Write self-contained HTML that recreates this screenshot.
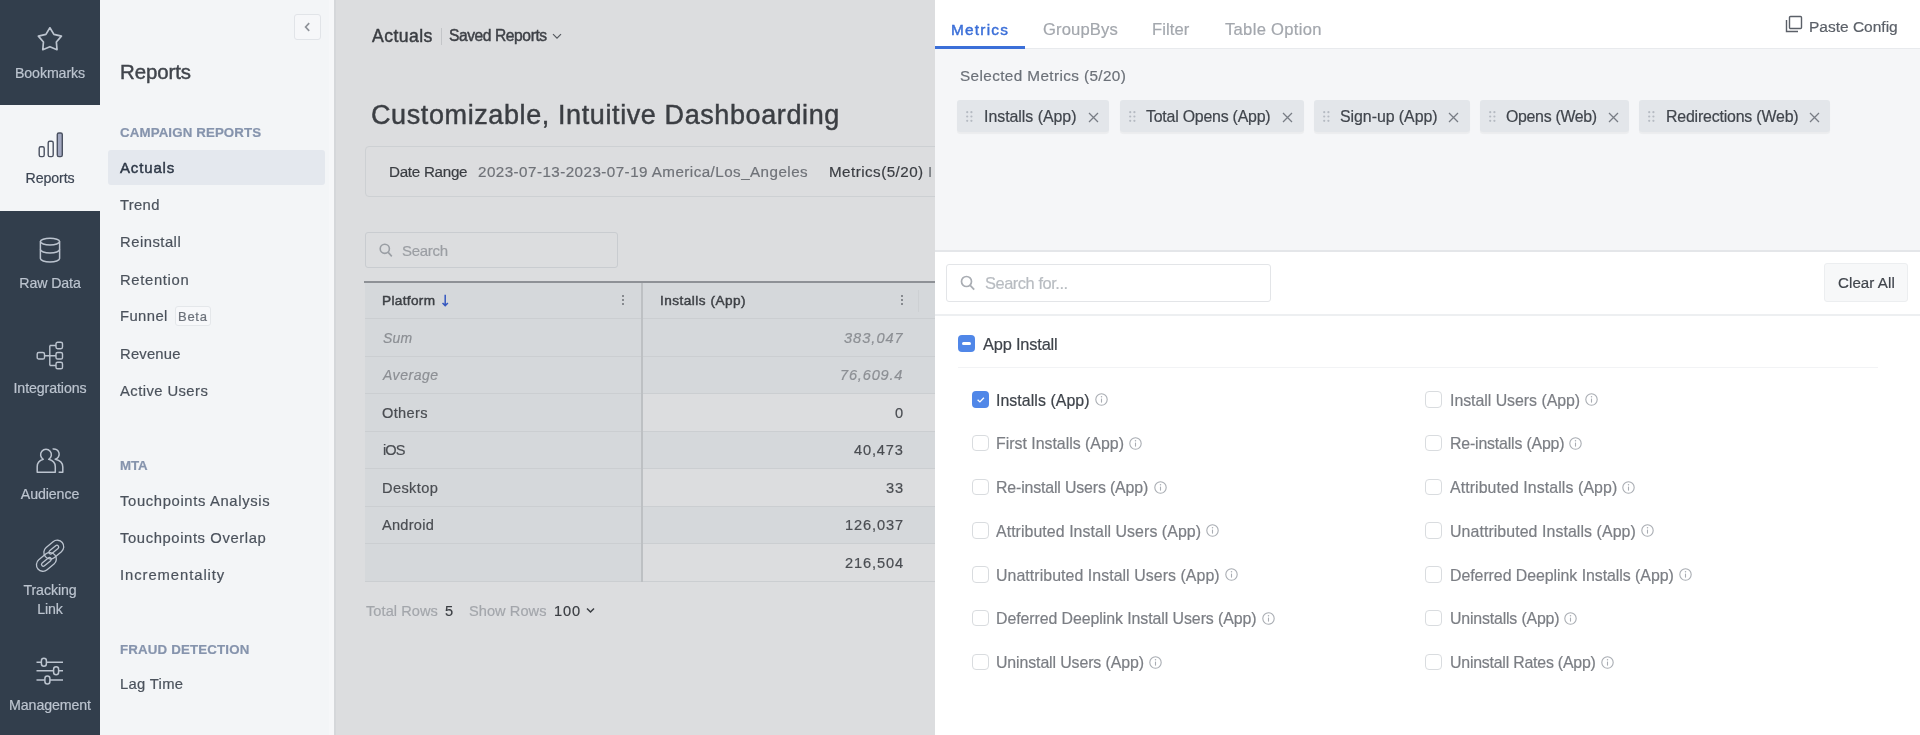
<!DOCTYPE html>
<html><head><meta charset="utf-8">
<style>
*{box-sizing:border-box;margin:0;padding:0}
html,body{width:1920px;height:735px;overflow:hidden;background:#fff;font-family:"Liberation Sans",sans-serif;position:relative}
.abs{position:absolute}
.t{position:absolute;white-space:nowrap;-webkit-text-stroke-width:0.2px;will-change:transform}
</style></head><body>
<div class="abs" style="left:0px;top:0px;width:100px;height:735px;background:#323e4c;"></div>
<div class="abs" style="left:0px;top:105px;width:100px;height:106px;background:#f3f5f7;"></div>
<div class="t" style="left:0;width:100px;text-align:center;top:66.00px;font-size:14.2px;line-height:14.2px;color:#bcc4cf;letter-spacing:-0.1px">Bookmarks</div>
<div class="t" style="left:0;width:100px;text-align:center;top:171.00px;font-size:14.2px;line-height:14.2px;color:#3d4654;letter-spacing:-0.1px">Reports</div>
<div class="t" style="left:0;width:100px;text-align:center;top:276.00px;font-size:14.2px;line-height:14.2px;color:#bcc4cf;letter-spacing:-0.1px">Raw Data</div>
<div class="t" style="left:0;width:100px;text-align:center;top:381.00px;font-size:14.2px;line-height:14.2px;color:#bcc4cf;letter-spacing:-0.1px">Integrations</div>
<div class="t" style="left:0;width:100px;text-align:center;top:487.00px;font-size:14.2px;line-height:14.2px;color:#bcc4cf;letter-spacing:-0.1px">Audience</div>
<div class="t" style="left:0;width:100px;text-align:center;top:583.00px;font-size:14.2px;line-height:14.2px;color:#bcc4cf;letter-spacing:-0.1px">Tracking</div>
<div class="t" style="left:0;width:100px;text-align:center;top:602.00px;font-size:14.2px;line-height:14.2px;color:#bcc4cf;letter-spacing:-0.1px">Link</div>
<div class="t" style="left:0;width:100px;text-align:center;top:698.00px;font-size:14.2px;line-height:14.2px;color:#bcc4cf;letter-spacing:-0.1px">Management</div>
<svg class="abs" style="left:36px;top:27px" width="28" height="27" viewBox="0 0 28 27"><path d="M13.90 0.80 L17.90 7.40 L25.41 9.16 L20.37 15.00 L21.01 22.69 L13.90 19.70 L6.79 22.69 L7.43 15.00 L2.39 9.16 L9.90 7.40z" fill="none" stroke="#bcc4cf" stroke-width="1.7" stroke-linejoin="round"/></svg>
<svg class="abs" style="left:36px;top:131px" width="28" height="28" viewBox="0 0 28 28"><g fill="none" stroke="#4a5161" stroke-width="1.4"><rect x="3.2" y="15.7" width="5" height="9.9" rx="1.6"/><rect x="12.2" y="10.2" width="5" height="15.4" rx="1.6"/><rect x="21.3" y="2" width="5" height="23.6" rx="1.6" fill="#a2a8c0"/></g></svg>
<svg class="abs" style="left:38px;top:236px" width="25" height="28" viewBox="0 0 25 28"><g fill="none" stroke="#bcc4cf" stroke-width="1.5"><ellipse cx="12" cy="5.6" rx="9.6" ry="3.4"/><path d="M2.4 5.6v17c0 1.9 4.3 3.4 9.6 3.4s9.6-1.5 9.6-3.4v-17"/><path d="M2.4 13.6c0 1.9 4.3 3.4 9.6 3.4s9.6-1.5 9.6-3.4"/></g></svg>
<svg class="abs" style="left:36px;top:341px" width="28" height="30" viewBox="0 0 28 30"><g fill="none" stroke="#bcc4cf" stroke-width="1.4"><rect x="1.2" y="11.5" width="7.3" height="6.5" rx="1.6"/><rect x="20" y="1.2" width="6.5" height="6.5" rx="1.6"/><rect x="20" y="11.5" width="6.5" height="6.5" rx="1.6"/><rect x="20" y="21.3" width="6.5" height="6.5" rx="1.6"/><path d="M8.5 14.75h11.5M13.8 4.5v20M13.8 4.5h6.2M13.8 24.5h6.2"/></g></svg>
<svg class="abs" style="left:30px;top:438px" width="40" height="42" viewBox="30 438 40 42"><g fill="none" stroke="#bcc4cf" stroke-width="1.5" stroke-linejoin="round"><path d="M43.3 459.3A5.4 5.4 0 1 1 48.7 459.3C52.6 460.2 55.3 462.8 55.3 466.8V472.3H37.2V466.8C37.2 462.8 39.9 460.2 43.3 459.3Z"/><path d="M52.6 449.1A5.2 5.2 0 0 1 55.2 459.3C59.8 460.3 62.8 463 62.8 467V472.3H58.6"/></g></svg>
<svg class="abs" style="left:32px;top:538px" width="36" height="36" viewBox="0 0 36 36"><g fill="none" stroke="#bcc4cf" stroke-width="1.3"><g transform="rotate(-40 21.8 11.6)"><rect x="10.8" y="5.1" width="22" height="13" rx="6.5"/><rect x="16.0" y="9.799999999999999" width="11.6" height="3.6" rx="1.8"/></g><g transform="rotate(-40 14.4 23.9)"><rect x="3.4000000000000004" y="17.4" width="22" height="13" rx="6.5"/><rect x="8.600000000000001" y="22.099999999999998" width="11.6" height="3.6" rx="1.8"/></g></g></svg>
<svg class="abs" style="left:35px;top:657px" width="30" height="30" viewBox="0 0 30 30"><g fill="none" stroke="#bcc4cf" stroke-width="1.5"><path d="M1.5 5.2h4.9M11.4 5.2h16.6M1.5 13.7h17.1M23.6 13.7h4.4M1.5 22.9h8.4M14.9 22.9h13.1"/><rect x="6.4" y="1.2" width="5" height="8" rx="2.5"/><rect x="18.6" y="9.7" width="5" height="8" rx="2.5"/><rect x="9.9" y="18.9" width="5" height="8" rx="2.5"/></g></svg>
<div class="abs" style="left:100px;top:0px;width:234px;height:735px;background:#f3f5f7;"></div>
<div class="abs" style="left:294px;top:14px;width:27px;height:26px;background:#f6f7f9;border:1px solid #e1e4e8;border-radius:3px;box-sizing:border-box;"></div>
<svg class="abs" style="left:303px;top:22px" width="8" height="10" viewBox="0 0 8 10"><path d="M6.2 1.2L2.6 5l3.6 3.8" fill="none" stroke="#8f9399" stroke-width="1.7"/></svg>
<div class="t" style="left:120.40px;top:62px;font-size:20.4px;line-height:20.4px;color:#40454c;-webkit-text-stroke-width:0.45px;letter-spacing:-0.07px;">Reports</div>
<div class="t" style="left:120.00px;top:126px;font-size:13.3px;line-height:13.3px;color:#8694ad;font-weight:700;letter-spacing:0.119px;">CAMPAIGN REPORTS</div>
<div class="abs" style="left:108px;top:150px;width:217px;height:34.5px;background:#e4e8ee;border-radius:3px;"></div>
<div class="t" style="left:119.70px;top:160px;font-size:15px;line-height:15px;color:#2d3746;-webkit-text-stroke-width:0.45px;letter-spacing:0.852px;">Actuals</div>
<div class="t" style="left:120.00px;top:198px;font-size:14.8px;line-height:14.8px;color:#4b525c;letter-spacing:0.323px;">Trend</div>
<div class="t" style="left:120.00px;top:235px;font-size:14.8px;line-height:14.8px;color:#4b525c;letter-spacing:0.493px;">Reinstall</div>
<div class="t" style="left:120.00px;top:273px;font-size:14.8px;line-height:14.8px;color:#4b525c;letter-spacing:0.668px;">Retention</div>
<div class="t" style="left:120.00px;top:309px;font-size:14.8px;line-height:14.8px;color:#4b525c;letter-spacing:0.428px;">Funnel</div>
<div class="t" style="left:120.00px;top:347px;font-size:14.8px;line-height:14.8px;color:#4b525c;letter-spacing:0.193px;">Revenue</div>
<div class="t" style="left:120.00px;top:384px;font-size:14.8px;line-height:14.8px;color:#4b525c;letter-spacing:0.431px;">Active Users</div>
<div class="t" style="left:120.00px;top:494px;font-size:14.8px;line-height:14.8px;color:#4b525c;letter-spacing:0.643px;">Touchpoints Analysis</div>
<div class="t" style="left:120.00px;top:531px;font-size:14.8px;line-height:14.8px;color:#4b525c;letter-spacing:0.605px;">Touchpoints Overlap</div>
<div class="t" style="left:120.00px;top:568px;font-size:14.8px;line-height:14.8px;color:#4b525c;letter-spacing:0.936px;">Incrementality</div>
<div class="t" style="left:120.00px;top:677px;font-size:14.8px;line-height:14.8px;color:#4b525c;letter-spacing:0.318px;">Lag Time</div>
<div class="abs" style="left:175px;top:306px;width:35.5px;height:19.5px;background:#f7f8fa;border:1px solid #e4e7ea;border-radius:3px;box-sizing:border-box;"></div>
<div class="t" style="left:177.60px;top:310px;font-size:13px;line-height:13px;color:#6b717a;letter-spacing:0.715px;">Beta</div>
<div class="t" style="left:120.00px;top:459px;font-size:13.3px;line-height:13.3px;color:#8694ad;font-weight:700;letter-spacing:-0.062px;">MTA</div>
<div class="t" style="left:120.00px;top:643px;font-size:13.3px;line-height:13.3px;color:#8694ad;font-weight:700;letter-spacing:0.158px;">FRAUD DETECTION</div>
<div class="abs" style="left:334px;top:0px;width:601px;height:735px;background:#dcdddf;"></div>
<div class="abs" style="left:334px;top:0px;width:1.5px;height:735px;background:#d5d7da;"></div>
<div class="abs" style="left:329px;top:0px;width:5px;height:735px;background:#f6f7f9;"></div>
<div class="t" style="left:371.90px;top:28px;font-size:17.6px;line-height:17.6px;color:#3a3d42;-webkit-text-stroke-width:0.45px;letter-spacing:0.448px;">Actuals</div>
<div class="abs" style="left:441px;top:28px;width:1px;height:17px;background:#c3c5c8;"></div>
<div class="t" style="left:448.75px;top:28px;font-size:15.6px;line-height:15.6px;color:#3e4147;-webkit-text-stroke-width:0.45px;letter-spacing:-0.42px;">Saved Reports</div>
<svg class="abs" style="left:552px;top:33px" width="10" height="7" viewBox="0 0 10 7"><path d="M1 1.2l4 4 4-4" fill="none" stroke="#55595f" stroke-width="1.2"/></svg>
<div class="t" style="left:370.90px;top:102px;font-size:27px;line-height:27px;color:#3b3e43;-webkit-text-stroke-width:0.45px;letter-spacing:0.601px;">Customizable, Intuitive Dashboarding</div>
<div class="abs" style="left:365px;top:146px;width:595px;height:51px;background:none;border:1px solid #cdd0d3;border-radius:4px;box-sizing:border-box;"></div>
<div class="t" style="left:388.70px;top:164px;font-size:15.2px;line-height:15.2px;color:#3a3d42;letter-spacing:-0.28px;">Date Range</div>
<div class="t" style="left:477.80px;top:164px;font-size:15.2px;line-height:15.2px;color:#6f7278;letter-spacing:0.452px;">2023-07-13-2023-07-19 America/Los_Angeles</div>
<div class="t" style="left:829.20px;top:164px;font-size:15.2px;line-height:15.2px;color:#3a3d42;letter-spacing:0.459px;">Metrics(5/20)</div>
<div class="t" style="left:928.00px;top:164px;font-size:15px;line-height:15px;color:#6f7278;">I</div>
<div class="abs" style="left:365px;top:232px;width:253px;height:36px;background:none;border:1px solid #c9ccd0;border-radius:3px;box-sizing:border-box;"></div>
<svg class="abs" style="left:379px;top:243px" width="14" height="15" viewBox="0 0 14 15"><g fill="none" stroke="#9a9ea4" stroke-width="1.6"><circle cx="5.8" cy="5.8" r="4.6"/><path d="M9.2 9.4l3.6 4"/></g></svg>
<div class="t" style="left:401.90px;top:243px;font-size:15px;line-height:15px;color:#9b9ea3;letter-spacing:-0.304px;">Search</div>
<div class="abs" style="left:365px;top:282px;width:570px;height:300px;background:#d5d8db;"></div>
<div class="abs" style="left:642px;top:394px;width:293px;height:37.5px;background:#dcdddf;"></div>
<div class="abs" style="left:642px;top:469px;width:293px;height:37.5px;background:#dcdddf;"></div>
<div class="abs" style="left:642px;top:544px;width:293px;height:37.5px;background:#dcdddf;"></div>
<div class="abs" style="left:364px;top:281px;width:571px;height:2px;background:#8e9196;"></div>
<div class="abs" style="left:365px;top:318px;width:570px;height:1px;background:#cbced1;"></div>
<div class="abs" style="left:365px;top:356px;width:570px;height:1px;background:#cbced1;"></div>
<div class="abs" style="left:365px;top:393px;width:570px;height:1px;background:#cbced1;"></div>
<div class="abs" style="left:365px;top:431px;width:570px;height:1px;background:#cbced1;"></div>
<div class="abs" style="left:365px;top:468px;width:570px;height:1px;background:#cbced1;"></div>
<div class="abs" style="left:365px;top:506px;width:570px;height:1px;background:#cbced1;"></div>
<div class="abs" style="left:365px;top:543px;width:570px;height:1px;background:#cbced1;"></div>
<div class="abs" style="left:365px;top:581px;width:570px;height:1px;background:#cbced1;"></div>
<div class="abs" style="left:641px;top:283px;width:2px;height:299px;background:#bdc0c3;"></div>
<div class="abs" style="left:918px;top:290px;width:1px;height:22px;background:#cdd0d3;"></div>
<div class="t" style="left:382.40px;top:294px;font-size:13.6px;line-height:13.6px;color:#3d4045;-webkit-text-stroke-width:0.45px;letter-spacing:0.352px;">Platform</div>
<svg class="abs" style="left:440px;top:294px" width="10" height="14" viewBox="0 0 10 14"><g fill="none" stroke="#3558c0" stroke-width="1.5"><path d="M5.2 0.8v10.6M2.5 9L5.2 11.6 7.9 9"/></g></svg>
<div class="abs" style="left:622px;top:295px;width:2px;height:2px;background:#6d7176;border-radius:1px;"></div><div class="abs" style="left:622px;top:299px;width:2px;height:2px;background:#6d7176;border-radius:1px;"></div><div class="abs" style="left:622px;top:303px;width:2px;height:2px;background:#6d7176;border-radius:1px;"></div>
<div class="abs" style="left:901px;top:295px;width:2px;height:2px;background:#6d7176;border-radius:1px;"></div><div class="abs" style="left:901px;top:299px;width:2px;height:2px;background:#6d7176;border-radius:1px;"></div><div class="abs" style="left:901px;top:303px;width:2px;height:2px;background:#6d7176;border-radius:1px;"></div>
<div class="t" style="left:660.20px;top:294px;font-size:13.6px;line-height:13.6px;color:#3d4045;-webkit-text-stroke-width:0.45px;letter-spacing:0.48px;">Installs (App)</div>
<div class="t" style="left:383.30px;top:331px;font-size:14px;line-height:14px;color:#8c8f94;letter-spacing:0.208px;font-style:italic;">Sum</div>
<div class="t" style="left:843.70px;top:331px;font-size:14.6px;line-height:14.6px;color:#8c8f94;letter-spacing:0.995px;font-style:italic;">383,047</div>
<div class="t" style="left:383.10px;top:368px;font-size:14px;line-height:14px;color:#8c8f94;letter-spacing:0.534px;font-style:italic;">Average</div>
<div class="t" style="left:840.40px;top:368px;font-size:14.6px;line-height:14.6px;color:#8c8f94;letter-spacing:0.809px;font-style:italic;">76,609.4</div>
<div class="t" style="left:382.20px;top:406px;font-size:14.6px;line-height:14.6px;color:#4a4d52;letter-spacing:0.337px;">Others</div>
<div class="t" style="left:895.00px;top:406px;font-size:14.6px;line-height:14.6px;color:#4a4d52;">0</div>
<div class="t" style="left:382.50px;top:443px;font-size:14.6px;line-height:14.6px;color:#4a4d52;letter-spacing:-0.969px;">iOS</div>
<div class="t" style="left:854.00px;top:443px;font-size:14.6px;line-height:14.6px;color:#4a4d52;letter-spacing:0.848px;">40,473</div>
<div class="t" style="left:382.40px;top:481px;font-size:14.6px;line-height:14.6px;color:#4a4d52;letter-spacing:0.375px;">Desktop</div>
<div class="t" style="left:885.90px;top:481px;font-size:14.6px;line-height:14.6px;color:#4a4d52;letter-spacing:0.765px;">33</div>
<div class="t" style="left:382.40px;top:518px;font-size:14.6px;line-height:14.6px;color:#4a4d52;letter-spacing:0.262px;">Android</div>
<div class="t" style="left:844.70px;top:518px;font-size:14.6px;line-height:14.6px;color:#4a4d52;letter-spacing:0.903px;">126,037</div>
<div class="t" style="left:844.70px;top:556px;font-size:14.6px;line-height:14.6px;color:#4a4d52;letter-spacing:0.903px;">216,504</div>
<div class="t" style="left:365.90px;top:604px;font-size:14.6px;line-height:14.6px;color:#a3a6ab;letter-spacing:0.055px;">Total Rows</div>
<div class="t" style="left:445.00px;top:604px;font-size:14.6px;line-height:14.6px;color:#3a3d42;">5</div>
<div class="t" style="left:468.80px;top:604px;font-size:14.6px;line-height:14.6px;color:#a3a6ab;letter-spacing:0.051px;">Show Rows</div>
<div class="t" style="left:553.50px;top:604px;font-size:14.6px;line-height:14.6px;color:#3a3d42;letter-spacing:0.874px;">100</div>
<svg class="abs" style="left:586px;top:607px" width="9" height="7" viewBox="0 0 9 7"><path d="M1 1.5l3.5 3.5 3.5-3.5" fill="none" stroke="#3a3d42" stroke-width="1.5"/></svg>
<div class="abs" style="left:935px;top:0px;width:985px;height:735px;background:#ffffff;border-top-left-radius:8px;"></div>
<div class="t" style="left:950.90px;top:22px;font-size:15.4px;line-height:15.4px;color:#3b6fd8;-webkit-text-stroke-width:0.45px;letter-spacing:1.23px;">Metrics</div>
<div class="t" style="left:1042.70px;top:22px;font-size:16.6px;line-height:16.6px;color:#a3a7ad;letter-spacing:0.142px;">GroupBys</div>
<div class="t" style="left:1152.00px;top:22px;font-size:16.6px;line-height:16.6px;color:#a3a7ad;letter-spacing:0.103px;">Filter</div>
<div class="t" style="left:1224.70px;top:22px;font-size:16.6px;line-height:16.6px;color:#a3a7ad;letter-spacing:0.299px;">Table Option</div>
<div class="abs" style="left:935px;top:48px;width:985px;height:1px;background:#e8eaed;"></div>
<div class="abs" style="left:935px;top:45.5px;width:90px;height:3.0px;background:#3b6fd8;"></div>
<svg class="abs" style="left:1785px;top:15px" width="18" height="18" viewBox="0 0 18 18"><g fill="none" stroke="#5b6068" stroke-width="1.4"><rect x="4.5" y="1.5" width="12" height="12" rx="1"/><path d="M1.5 5v11.5h11.5"/></g></svg>
<div class="t" style="left:1809.00px;top:19px;font-size:15.5px;line-height:15.5px;color:#5b6068;letter-spacing:-0.005px;">Paste Config</div>
<div class="abs" style="left:935px;top:49px;width:985px;height:201px;background:#f5f6f8;"></div>
<div class="abs" style="left:935px;top:250px;width:985px;height:1.5px;background:#e4e6e9;"></div>
<div class="t" style="left:959.50px;top:68px;font-size:15.3px;line-height:15.3px;color:#6b7078;letter-spacing:0.39px;">Selected Metrics (5/20)</div>
<div class="abs" style="left:957px;top:100px;width:152px;height:31.5px;background:#e3e6ea;border-radius:3px;box-shadow:0 1.5px 1px rgba(0,0,0,0.04);"></div>
<svg class="abs" style="left:966px;top:111px" width="8" height="12" viewBox="0 0 8 12"><circle cx="1.2" cy="1.2" r="1.1" fill="#b5bac2"/><circle cx="1.2" cy="5.5" r="1.1" fill="#b5bac2"/><circle cx="1.2" cy="9.799999999999999" r="1.1" fill="#b5bac2"/><circle cx="5.4" cy="1.2" r="1.1" fill="#b5bac2"/><circle cx="5.4" cy="5.5" r="1.1" fill="#b5bac2"/><circle cx="5.4" cy="9.799999999999999" r="1.1" fill="#b5bac2"/></svg>
<div class="t" style="left:983.70px;top:109px;font-size:15.9px;line-height:15.9px;color:#40454c;letter-spacing:-0.021px;">Installs (App)</div>
<svg class="abs" style="left:1088px;top:112px" width="11" height="11" viewBox="0 0 11 11"><path d="M1 1l9 9M10 1l-9 9" fill="none" stroke="#787d85" stroke-width="1.3"/></svg>
<div class="abs" style="left:1119.5px;top:100px;width:184.0px;height:31.5px;background:#e3e6ea;border-radius:3px;box-shadow:0 1.5px 1px rgba(0,0,0,0.04);"></div>
<svg class="abs" style="left:1129px;top:111px" width="8" height="12" viewBox="0 0 8 12"><circle cx="1.2" cy="1.2" r="1.1" fill="#b5bac2"/><circle cx="1.2" cy="5.5" r="1.1" fill="#b5bac2"/><circle cx="1.2" cy="9.799999999999999" r="1.1" fill="#b5bac2"/><circle cx="5.4" cy="1.2" r="1.1" fill="#b5bac2"/><circle cx="5.4" cy="5.5" r="1.1" fill="#b5bac2"/><circle cx="5.4" cy="9.799999999999999" r="1.1" fill="#b5bac2"/></svg>
<div class="t" style="left:1146.10px;top:109px;font-size:15.9px;line-height:15.9px;color:#40454c;letter-spacing:-0.216px;">Total Opens (App)</div>
<svg class="abs" style="left:1282px;top:112px" width="11" height="11" viewBox="0 0 11 11"><path d="M1 1l9 9M10 1l-9 9" fill="none" stroke="#787d85" stroke-width="1.3"/></svg>
<div class="abs" style="left:1313.5px;top:100px;width:156.0px;height:31.5px;background:#e3e6ea;border-radius:3px;box-shadow:0 1.5px 1px rgba(0,0,0,0.04);"></div>
<svg class="abs" style="left:1323px;top:111px" width="8" height="12" viewBox="0 0 8 12"><circle cx="1.2" cy="1.2" r="1.1" fill="#b5bac2"/><circle cx="1.2" cy="5.5" r="1.1" fill="#b5bac2"/><circle cx="1.2" cy="9.799999999999999" r="1.1" fill="#b5bac2"/><circle cx="5.4" cy="1.2" r="1.1" fill="#b5bac2"/><circle cx="5.4" cy="5.5" r="1.1" fill="#b5bac2"/><circle cx="5.4" cy="9.799999999999999" r="1.1" fill="#b5bac2"/></svg>
<div class="t" style="left:1340.20px;top:109px;font-size:15.9px;line-height:15.9px;color:#40454c;letter-spacing:-0.042px;">Sign-up (App)</div>
<svg class="abs" style="left:1448px;top:112px" width="11" height="11" viewBox="0 0 11 11"><path d="M1 1l9 9M10 1l-9 9" fill="none" stroke="#787d85" stroke-width="1.3"/></svg>
<div class="abs" style="left:1480px;top:100px;width:149px;height:31.5px;background:#e3e6ea;border-radius:3px;box-shadow:0 1.5px 1px rgba(0,0,0,0.04);"></div>
<svg class="abs" style="left:1489px;top:111px" width="8" height="12" viewBox="0 0 8 12"><circle cx="1.2" cy="1.2" r="1.1" fill="#b5bac2"/><circle cx="1.2" cy="5.5" r="1.1" fill="#b5bac2"/><circle cx="1.2" cy="9.799999999999999" r="1.1" fill="#b5bac2"/><circle cx="5.4" cy="1.2" r="1.1" fill="#b5bac2"/><circle cx="5.4" cy="5.5" r="1.1" fill="#b5bac2"/><circle cx="5.4" cy="9.799999999999999" r="1.1" fill="#b5bac2"/></svg>
<div class="t" style="left:1506.00px;top:109px;font-size:15.9px;line-height:15.9px;color:#40454c;letter-spacing:-0.306px;">Opens (Web)</div>
<svg class="abs" style="left:1608px;top:112px" width="11" height="11" viewBox="0 0 11 11"><path d="M1 1l9 9M10 1l-9 9" fill="none" stroke="#787d85" stroke-width="1.3"/></svg>
<div class="abs" style="left:1639px;top:100px;width:191px;height:31.5px;background:#e3e6ea;border-radius:3px;box-shadow:0 1.5px 1px rgba(0,0,0,0.04);"></div>
<svg class="abs" style="left:1648px;top:111px" width="8" height="12" viewBox="0 0 8 12"><circle cx="1.2" cy="1.2" r="1.1" fill="#b5bac2"/><circle cx="1.2" cy="5.5" r="1.1" fill="#b5bac2"/><circle cx="1.2" cy="9.799999999999999" r="1.1" fill="#b5bac2"/><circle cx="5.4" cy="1.2" r="1.1" fill="#b5bac2"/><circle cx="5.4" cy="5.5" r="1.1" fill="#b5bac2"/><circle cx="5.4" cy="9.799999999999999" r="1.1" fill="#b5bac2"/></svg>
<div class="t" style="left:1665.60px;top:109px;font-size:15.9px;line-height:15.9px;color:#40454c;letter-spacing:-0.182px;">Redirections (Web)</div>
<svg class="abs" style="left:1809px;top:112px" width="11" height="11" viewBox="0 0 11 11"><path d="M1 1l9 9M10 1l-9 9" fill="none" stroke="#787d85" stroke-width="1.3"/></svg>
<div class="abs" style="left:946px;top:264px;width:325px;height:37.5px;background:#fff;border:1px solid #e3e5e8;border-radius:3px;box-sizing:border-box;"></div>
<svg class="abs" style="left:960px;top:275px" width="16" height="16" viewBox="0 0 16 16"><g fill="none" stroke="#a9adb3" stroke-width="1.7"><circle cx="6.5" cy="6.5" r="5"/><path d="M10.2 10.4l4 4.2"/></g></svg>
<div class="t" style="left:984.90px;top:275px;font-size:16.4px;line-height:16.4px;color:#b8bcc1;letter-spacing:-0.444px;">Search for...</div>
<div class="abs" style="left:1824px;top:263px;width:84px;height:38.5px;background:#f7f8f9;border:1px solid #eceef0;border-radius:3px;box-sizing:border-box;"></div>
<div class="t" style="left:1837.70px;top:275px;font-size:15.1px;line-height:15.1px;color:#40454c;letter-spacing:0.071px;">Clear All</div>
<div class="abs" style="left:935px;top:313.5px;width:985px;height:2.0px;background:#edeff1;"></div>
<div class="abs" style="left:958px;top:335px;width:17px;height:17px;background:#5087e8;border-radius:4px;"></div>
<div class="abs" style="left:961.5px;top:342.3px;width:9.5px;height:3.0px;background:#ffffff;border-radius:1.5px;"></div>
<div class="t" style="left:982.60px;top:336px;font-size:16.4px;line-height:16.4px;color:#3e434a;letter-spacing:-0.187px;">App Install</div>
<div class="abs" style="left:958px;top:367px;width:920px;height:1px;background:#f2f3f5;"></div>
<div class="abs" style="left:972px;top:391.0px;width:17px;height:16.69999999999999px;background:#5087e8;border-radius:4px;"></div>
<svg class="abs" style="left:972px;top:391px" width="17" height="17" viewBox="0 0 17 17"><path d="M5.6 8.8l2.3 2.1 4-4.1" fill="none" stroke="#fff" stroke-width="1.4"/></svg>
<div class="t" style="left:996.30px;top:393px;font-size:15.9px;line-height:15.9px;color:#3e434a;letter-spacing:0.056px;">Installs (App)</div>
<svg class="abs" style="left:1095px;top:393px" width="13" height="13" viewBox="0 0 13 13"><g fill="none" stroke="#a9adb3" stroke-width="1.1"><circle cx="6.5" cy="6.5" r="5.7"/></g><path d="M6.5 5.6v4" stroke="#a9adb3" stroke-width="1.1"/><circle cx="6.5" cy="3.7" r=".75" fill="#a9adb3"/></svg>
<div class="abs" style="left:1425px;top:391.0px;width:17px;height:16.69999999999999px;background:#fff;border:1px solid #d9dcdf;border-radius:4px;box-sizing:border-box;"></div>
<div class="t" style="left:1449.80px;top:393px;font-size:15.9px;line-height:15.9px;color:#7b7e84;letter-spacing:-0.032px;">Install Users (App)</div>
<svg class="abs" style="left:1585px;top:393px" width="13" height="13" viewBox="0 0 13 13"><g fill="none" stroke="#a9adb3" stroke-width="1.1"><circle cx="6.5" cy="6.5" r="5.7"/></g><path d="M6.5 5.6v4" stroke="#a9adb3" stroke-width="1.1"/><circle cx="6.5" cy="3.7" r=".75" fill="#a9adb3"/></svg>
<div class="abs" style="left:972px;top:434.75px;width:17px;height:16.69999999999999px;background:#fff;border:1px solid #d9dcdf;border-radius:4px;box-sizing:border-box;"></div>
<div class="t" style="left:996.30px;top:436px;font-size:15.9px;line-height:15.9px;color:#7b7e84;letter-spacing:-0.006px;">First Installs (App)</div>
<svg class="abs" style="left:1129px;top:437px" width="13" height="13" viewBox="0 0 13 13"><g fill="none" stroke="#a9adb3" stroke-width="1.1"><circle cx="6.5" cy="6.5" r="5.7"/></g><path d="M6.5 5.6v4" stroke="#a9adb3" stroke-width="1.1"/><circle cx="6.5" cy="3.7" r=".75" fill="#a9adb3"/></svg>
<div class="abs" style="left:1425px;top:434.75px;width:17px;height:16.69999999999999px;background:#fff;border:1px solid #d9dcdf;border-radius:4px;box-sizing:border-box;"></div>
<div class="t" style="left:1449.80px;top:436px;font-size:15.9px;line-height:15.9px;color:#7b7e84;letter-spacing:-0.182px;">Re-installs (App)</div>
<svg class="abs" style="left:1569px;top:437px" width="13" height="13" viewBox="0 0 13 13"><g fill="none" stroke="#a9adb3" stroke-width="1.1"><circle cx="6.5" cy="6.5" r="5.7"/></g><path d="M6.5 5.6v4" stroke="#a9adb3" stroke-width="1.1"/><circle cx="6.5" cy="3.7" r=".75" fill="#a9adb3"/></svg>
<div class="abs" style="left:972px;top:478.5px;width:17px;height:16.69999999999999px;background:#fff;border:1px solid #d9dcdf;border-radius:4px;box-sizing:border-box;"></div>
<div class="t" style="left:996.30px;top:480px;font-size:15.9px;line-height:15.9px;color:#7b7e84;letter-spacing:-0.152px;">Re-install Users (App)</div>
<svg class="abs" style="left:1154px;top:481px" width="13" height="13" viewBox="0 0 13 13"><g fill="none" stroke="#a9adb3" stroke-width="1.1"><circle cx="6.5" cy="6.5" r="5.7"/></g><path d="M6.5 5.6v4" stroke="#a9adb3" stroke-width="1.1"/><circle cx="6.5" cy="3.7" r=".75" fill="#a9adb3"/></svg>
<div class="abs" style="left:1425px;top:478.5px;width:17px;height:16.69999999999999px;background:#fff;border:1px solid #d9dcdf;border-radius:4px;box-sizing:border-box;"></div>
<div class="t" style="left:1449.80px;top:480px;font-size:15.9px;line-height:15.9px;color:#7b7e84;letter-spacing:0.085px;">Attributed Installs (App)</div>
<svg class="abs" style="left:1622px;top:481px" width="13" height="13" viewBox="0 0 13 13"><g fill="none" stroke="#a9adb3" stroke-width="1.1"><circle cx="6.5" cy="6.5" r="5.7"/></g><path d="M6.5 5.6v4" stroke="#a9adb3" stroke-width="1.1"/><circle cx="6.5" cy="3.7" r=".75" fill="#a9adb3"/></svg>
<div class="abs" style="left:972px;top:522.25px;width:17px;height:16.700000000000045px;background:#fff;border:1px solid #d9dcdf;border-radius:4px;box-sizing:border-box;"></div>
<div class="t" style="left:996.30px;top:524px;font-size:15.9px;line-height:15.9px;color:#7b7e84;letter-spacing:0.064px;">Attributed Install Users (App)</div>
<svg class="abs" style="left:1206px;top:524px" width="13" height="13" viewBox="0 0 13 13"><g fill="none" stroke="#a9adb3" stroke-width="1.1"><circle cx="6.5" cy="6.5" r="5.7"/></g><path d="M6.5 5.6v4" stroke="#a9adb3" stroke-width="1.1"/><circle cx="6.5" cy="3.7" r=".75" fill="#a9adb3"/></svg>
<div class="abs" style="left:1425px;top:522.25px;width:17px;height:16.700000000000045px;background:#fff;border:1px solid #d9dcdf;border-radius:4px;box-sizing:border-box;"></div>
<div class="t" style="left:1449.80px;top:524px;font-size:15.9px;line-height:15.9px;color:#7b7e84;letter-spacing:0.08px;">Unattributed Installs (App)</div>
<svg class="abs" style="left:1641px;top:524px" width="13" height="13" viewBox="0 0 13 13"><g fill="none" stroke="#a9adb3" stroke-width="1.1"><circle cx="6.5" cy="6.5" r="5.7"/></g><path d="M6.5 5.6v4" stroke="#a9adb3" stroke-width="1.1"/><circle cx="6.5" cy="3.7" r=".75" fill="#a9adb3"/></svg>
<div class="abs" style="left:972px;top:566.0px;width:17px;height:16.700000000000045px;background:#fff;border:1px solid #d9dcdf;border-radius:4px;box-sizing:border-box;"></div>
<div class="t" style="left:996.30px;top:568px;font-size:15.9px;line-height:15.9px;color:#7b7e84;letter-spacing:0.061px;">Unattributed Install Users (App)</div>
<svg class="abs" style="left:1225px;top:568px" width="13" height="13" viewBox="0 0 13 13"><g fill="none" stroke="#a9adb3" stroke-width="1.1"><circle cx="6.5" cy="6.5" r="5.7"/></g><path d="M6.5 5.6v4" stroke="#a9adb3" stroke-width="1.1"/><circle cx="6.5" cy="3.7" r=".75" fill="#a9adb3"/></svg>
<div class="abs" style="left:1425px;top:566.0px;width:17px;height:16.700000000000045px;background:#fff;border:1px solid #d9dcdf;border-radius:4px;box-sizing:border-box;"></div>
<div class="t" style="left:1449.80px;top:568px;font-size:15.9px;line-height:15.9px;color:#7b7e84;letter-spacing:-0.047px;">Deferred Deeplink Installs (App)</div>
<svg class="abs" style="left:1679px;top:568px" width="13" height="13" viewBox="0 0 13 13"><g fill="none" stroke="#a9adb3" stroke-width="1.1"><circle cx="6.5" cy="6.5" r="5.7"/></g><path d="M6.5 5.6v4" stroke="#a9adb3" stroke-width="1.1"/><circle cx="6.5" cy="3.7" r=".75" fill="#a9adb3"/></svg>
<div class="abs" style="left:972px;top:609.75px;width:17px;height:16.700000000000045px;background:#fff;border:1px solid #d9dcdf;border-radius:4px;box-sizing:border-box;"></div>
<div class="t" style="left:996.30px;top:611px;font-size:15.9px;line-height:15.9px;color:#7b7e84;letter-spacing:-0.07px;">Deferred Deeplink Install Users (App)</div>
<svg class="abs" style="left:1262px;top:612px" width="13" height="13" viewBox="0 0 13 13"><g fill="none" stroke="#a9adb3" stroke-width="1.1"><circle cx="6.5" cy="6.5" r="5.7"/></g><path d="M6.5 5.6v4" stroke="#a9adb3" stroke-width="1.1"/><circle cx="6.5" cy="3.7" r=".75" fill="#a9adb3"/></svg>
<div class="abs" style="left:1425px;top:609.75px;width:17px;height:16.700000000000045px;background:#fff;border:1px solid #d9dcdf;border-radius:4px;box-sizing:border-box;"></div>
<div class="t" style="left:1449.80px;top:611px;font-size:15.9px;line-height:15.9px;color:#7b7e84;letter-spacing:-0.175px;">Uninstalls (App)</div>
<svg class="abs" style="left:1564px;top:612px" width="13" height="13" viewBox="0 0 13 13"><g fill="none" stroke="#a9adb3" stroke-width="1.1"><circle cx="6.5" cy="6.5" r="5.7"/></g><path d="M6.5 5.6v4" stroke="#a9adb3" stroke-width="1.1"/><circle cx="6.5" cy="3.7" r=".75" fill="#a9adb3"/></svg>
<div class="abs" style="left:972px;top:653.5px;width:17px;height:16.700000000000045px;background:#fff;border:1px solid #d9dcdf;border-radius:4px;box-sizing:border-box;"></div>
<div class="t" style="left:996.30px;top:655px;font-size:15.9px;line-height:15.9px;color:#7b7e84;letter-spacing:-0.11px;">Uninstall Users (App)</div>
<svg class="abs" style="left:1149px;top:656px" width="13" height="13" viewBox="0 0 13 13"><g fill="none" stroke="#a9adb3" stroke-width="1.1"><circle cx="6.5" cy="6.5" r="5.7"/></g><path d="M6.5 5.6v4" stroke="#a9adb3" stroke-width="1.1"/><circle cx="6.5" cy="3.7" r=".75" fill="#a9adb3"/></svg>
<div class="abs" style="left:1425px;top:653.5px;width:17px;height:16.700000000000045px;background:#fff;border:1px solid #d9dcdf;border-radius:4px;box-sizing:border-box;"></div>
<div class="t" style="left:1449.80px;top:655px;font-size:15.9px;line-height:15.9px;color:#7b7e84;letter-spacing:-0.216px;">Uninstall Rates (App)</div>
<svg class="abs" style="left:1601px;top:656px" width="13" height="13" viewBox="0 0 13 13"><g fill="none" stroke="#a9adb3" stroke-width="1.1"><circle cx="6.5" cy="6.5" r="5.7"/></g><path d="M6.5 5.6v4" stroke="#a9adb3" stroke-width="1.1"/><circle cx="6.5" cy="3.7" r=".75" fill="#a9adb3"/></svg>
</body></html>
